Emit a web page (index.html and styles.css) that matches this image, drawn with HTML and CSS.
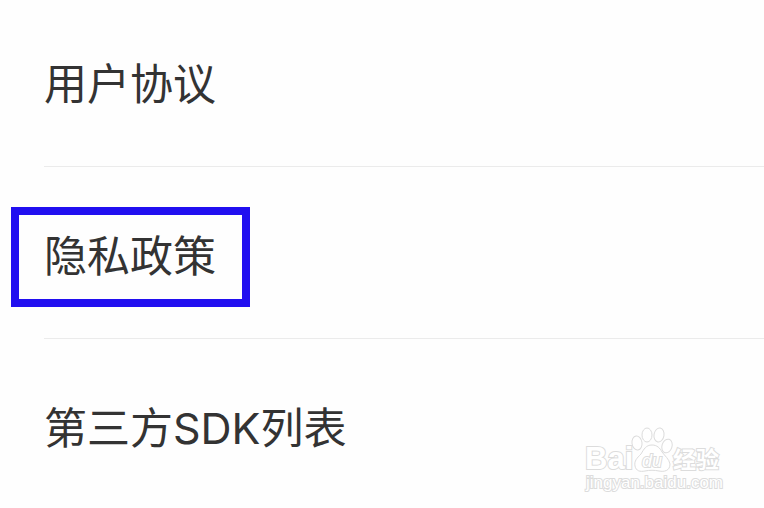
FILE: index.html
```html
<!DOCTYPE html>
<html lang="zh-CN">
<head>
    <meta charset="UTF-8">
    <meta name="viewport" content="width=device-width, initial-scale=1.0">
    <title>用户协议</title>
    <link rel="stylesheet" href="styles.css">
</head>
<body>
    <ul class="menu">
        <li class="menu-item"><a href="#agreement">用户协议</a></li>
        <li class="menu-item selected"><a href="#privacy">隐私政策</a></li>
        <li class="menu-item"><a href="#sdk">第三方SDK列表</a></li>
    </ul>

    <svg class="watermark" width="140" height="70" viewBox="0 0 140 70" role="img" aria-label="Baidu 经验">
        <text class="brand" x="1" y="42">Bai</text>
        <ellipse cx="53" cy="16" rx="5" ry="7" transform="rotate(-8 53 16)"/>
        <ellipse cx="63" cy="8" rx="5" ry="7"/>
        <ellipse cx="75" cy="8" rx="5" ry="7" transform="rotate(10 75 8)"/>
        <ellipse cx="83" cy="19" rx="5" ry="7" transform="rotate(18 83 19)"/>
        <path d="M68 18C62 18 60 22 57 27C53 31 50 34 51 39C52 44 56 45 61 44C66 43 70 43 75 44C80 45 86 44 86 37C85 32 81 29 78 25C76 21 73 18 68 18Z"/>
        <text class="du" x="58" y="40">du</text>
        <text class="name" x="89" y="41">经验</text>
        <text class="site" x="2" y="61">jingyan.baidu.com</text>
    </svg>
</body>
</html>
```

FILE: styles.css
```css
* {
    box-sizing: border-box;
}

body {
    margin: 0;
    background-color: #fefefe;
    font-family: Inter, "Noto Sans CJK SC", sans-serif;
}

.menu {
    list-style: none;
    margin: 0;
    padding: 0 0 0 44px;
}

.menu-item {
    position: relative;
    padding: 57px 0 49px;
    border-bottom: 1px solid #ebebeb;
}

.menu-item:first-child {
    padding-top: 52px;
}

.menu-item:last-child {
    border-bottom: none;
}

.menu-item a {
    display: block;
    color: #333;
    font-size: 43px;
    line-height: 65px;
    text-decoration: none;
}

/* frame around the highlighted entry */
.selected::after {
    content: "";
    position: absolute;
    box-sizing: border-box;
    top: 40px;
    left: -33px;
    width: 239px;
    height: 100px;
    border: 8px solid #210ff0;
    pointer-events: none;
}

.watermark {
    position: absolute;
    right: 40px;
    bottom: 11px;
    fill: #fff;
    stroke: #dcdcdc;
    stroke-width: 1px;
    font-family: "Liberation Sans", "Noto Sans CJK SC", sans-serif;
}

.watermark text {
    stroke-width: 2px;
    paint-order: stroke;
}

.brand {
    font-size: 31px;
    font-weight: bold;
}

.du {
    font-size: 18px;
    font-style: italic;
}

.name {
    font-family: "Noto Sans CJK SC", sans-serif;
    font-size: 23px;
    font-weight: bold;
}

.site {
    font-size: 17px;
}
```
